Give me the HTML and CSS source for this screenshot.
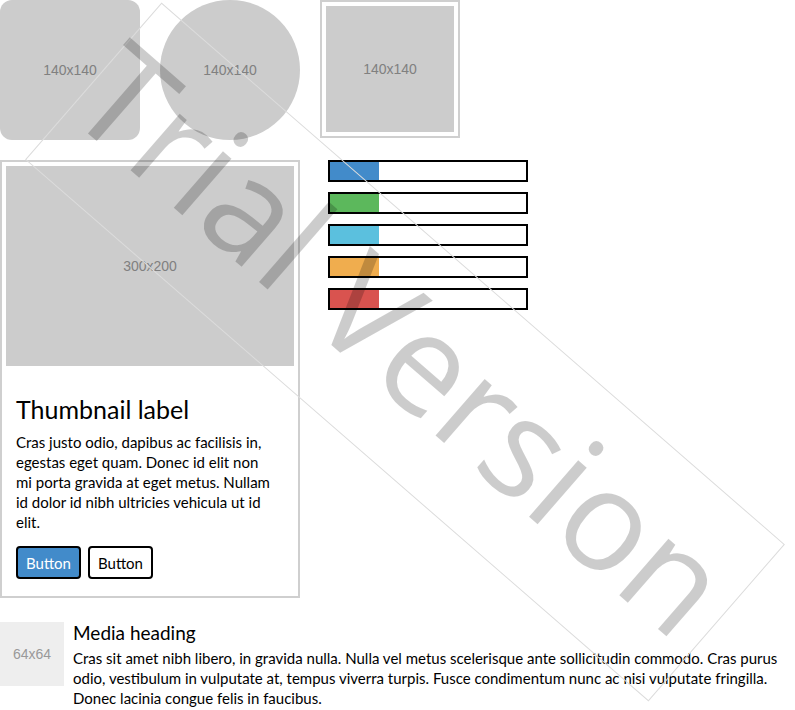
FILE: index.html
```html
<!DOCTYPE html>
<html>
<head>
<meta charset="utf-8">
<link rel="stylesheet" href="styles.css">
</head>
<body>
<div class="page">
  <div class="img-row">
    <div class="ph ph-rounded">140x140</div>
    <div class="ph ph-circle">140x140</div>
    <div class="ph-thumb"><div class="ph ph-inner">140x140</div></div>
  </div>

  <div class="mid-row">
    <div class="card">
      <div class="ph ph-big">300x200</div>
      <div class="caption">
        <h3 class="cap-title">Thumbnail label</h3>
        <p class="cap-text">Cras justo odio, dapibus ac facilisis in, egestas eget quam. Donec id elit non mi porta gravida at eget metus. Nullam id dolor id nibh ultricies vehicula ut id elit.</p>
        <div class="btns">
          <button class="btn btn-primary">Button</button>
          <button class="btn btn-default">Button</button>
        </div>
      </div>
    </div>

    <div class="bars">
      <div class="bar"><div class="fill fill-blue"></div></div>
      <div class="bar"><div class="fill fill-green"></div></div>
      <div class="bar"><div class="fill fill-cyan"></div></div>
      <div class="bar"><div class="fill fill-orange"></div></div>
      <div class="bar"><div class="fill fill-red"></div></div>
    </div>
  </div>

  <div class="media">
    <div class="media-ph">64x64</div>
    <div class="media-body">
      <h4 class="media-heading">Media heading</h4>
      <p class="media-text">Cras sit amet nibh libero, in gravida nulla. Nulla vel metus scelerisque ante sollicitudin commodo. Cras purus odio, vestibulum in vulputate at, tempus viverra turpis. Fusce condimentum nunc ac nisi vulputate fringilla. Donec lacinia congue felis in faucibus.</p>
    </div>
  </div>
</div>

<div class="watermark"><span class="wm-text">Trial Version</span></div>
</body>
</html>
```

FILE: styles.css
```css
html, body {
  margin: 0;
  padding: 0;
  background: #ffffff;
}

body {
  font-family: "Lato", "Open Sans", sans-serif;
  font-size: 15px;
  line-height: 20px;
  color: #000;
  width: 795px;
  height: 710px;
  overflow: hidden;
  position: relative;
}

.page {
  display: flex;
  flex-direction: column;
}

.img-row {
  display: flex;
  gap: 20px;
  align-items: flex-start;
}

.ph {
  background: #cccccc;
  color: #808080;
  font-family: "Liberation Sans", Arial, sans-serif;
  font-size: 14px;
  display: flex;
  align-items: center;
  justify-content: center;
}

.ph-rounded {
  width: 140px;
  height: 140px;
  border-radius: 12px;
}

.ph-circle {
  width: 140px;
  height: 140px;
  border-radius: 50%;
}

.ph-thumb {
  width: 140px;
  height: 138px;
  box-sizing: border-box;
  border: 2px solid #cfcfcf;
  padding: 4px;
  display: flex;
}

.ph-inner {
  flex: 1;
}

.mid-row {
  display: flex;
  align-items: flex-start;
  gap: 28px;
  margin-top: 20px;
}

.card {
  width: 300px;
  box-sizing: border-box;
  border: 2px solid #cfcfcf;
  padding: 4px;
}

.ph-big {
  height: 200px;
}

.caption {
  padding: 9px 18px 13px 10px;
}

.cap-title {
  font-size: 25px;
  font-weight: normal;
  line-height: 26px;
  margin: 21px 0 10px;
}

.cap-text {
  margin: 0 0 14px;
}

.btns {
  display: flex;
  gap: 7px;
}

.btn {
  font-family: inherit;
  font-size: 15px;
  height: 33px;
  padding: 0 8px;
  border: 2px solid #000;
  border-radius: 4px;
  margin: 0;
}

.btn-primary {
  background: #428bca;
  color: #ffffff;
}

.btn-default {
  background: #ffffff;
  color: #000000;
}

.bars {
  display: flex;
  flex-direction: column;
  gap: 10px;
}

.bar {
  width: 200px;
  height: 22px;
  box-sizing: border-box;
  border: 2px solid #000;
  background: #fff;
  display: flex;
}

.fill {
  width: 25%;
}

.fill-blue { background: #428bca; }
.fill-green { background: #5cb85c; }
.fill-cyan { background: #5bc0de; }
.fill-orange { background: #f0ad4e; }
.fill-red { background: #d9534f; }

.media {
  display: flex;
  gap: 9px;
  margin-top: 24px;
}

.media-ph {
  flex: none;
  width: 64px;
  height: 64px;
  background: #eeeeee;
  color: #999999;
  font-family: "Liberation Sans", Arial, sans-serif;
  font-size: 14px;
  display: flex;
  align-items: center;
  justify-content: center;
}

.media-body {
  flex: 1;
}

.media-heading {
  font-size: 19px;
  font-weight: normal;
  line-height: 20px;
  margin: 1px 0 5px;
}

.media-text {
  margin: 0;
}

.watermark {
  position: absolute;
  left: 405px;
  top: 352px;
  width: 826px;
  height: 208px;
  box-sizing: border-box;
  border: 1px solid #dcdcdc;
  transform: translate(-50%, -50%) rotate(41deg);
  display: flex;
  align-items: center;
  justify-content: center;
  pointer-events: none;
}

.wm-text {
  font-family: "Open Sans", sans-serif;
  font-size: 140px;
  line-height: 1;
  white-space: nowrap;
  color: rgba(0, 0, 0, 0.2);
  transform: translate(-10px, -11px);
}
```
